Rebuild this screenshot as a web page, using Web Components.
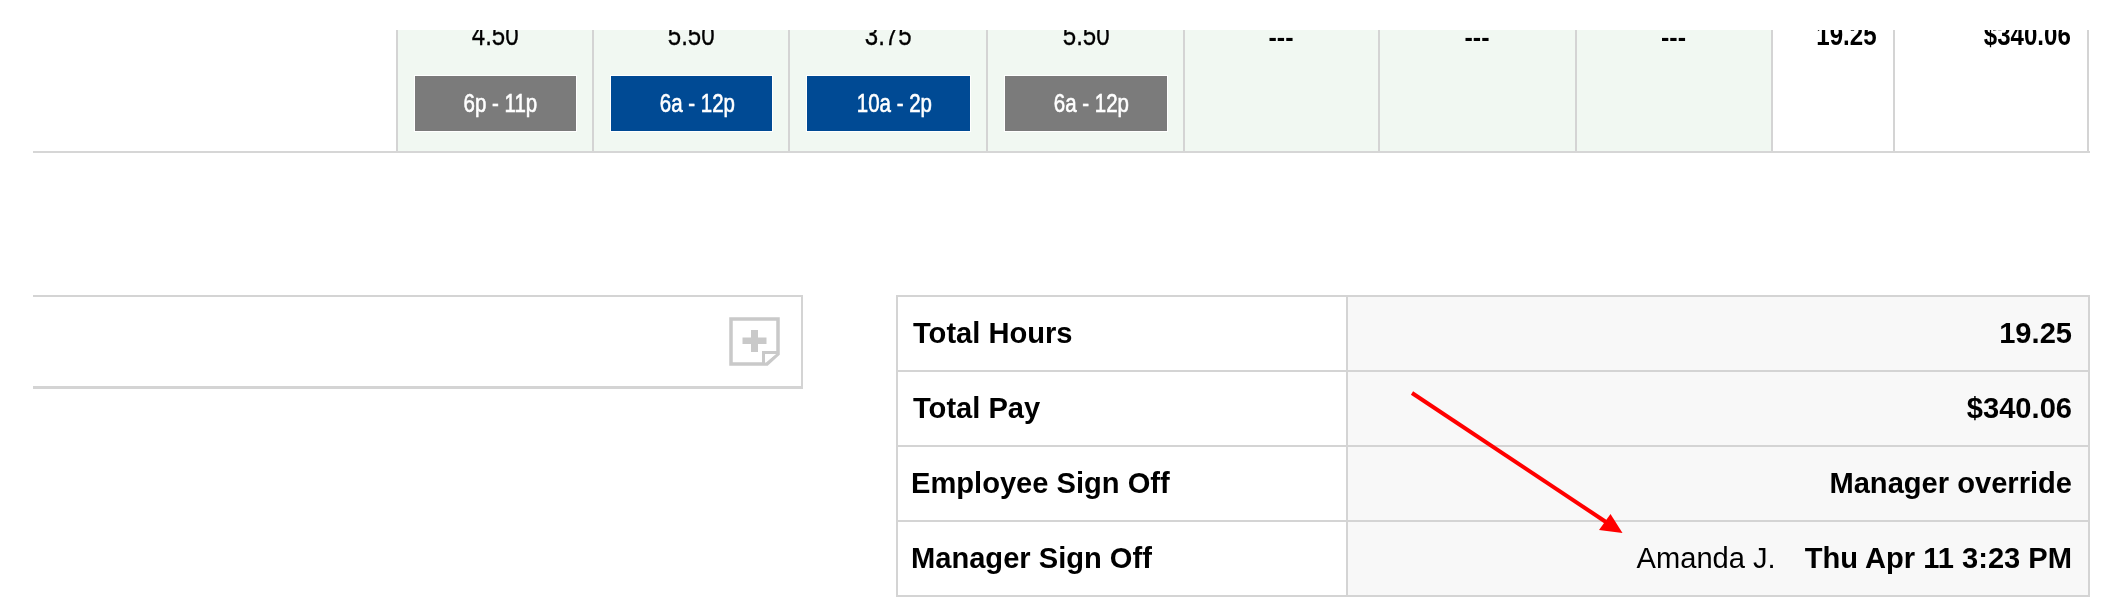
<!DOCTYPE html>
<html>
<head>
<meta charset="utf-8">
<title>Timesheet</title>
<style>
  html, body { margin: 0; background: #fff; }
  body { font-family: "Liberation Sans", Arial, sans-serif; color: #000; width: 2108px; height: 614px; overflow: hidden; position: relative; filter: blur(.45px); }
  .lower { display: flex; justify-content: space-between; align-items: flex-start; margin: 142px 18px 0 33px; }
</style>
</head>
<body>
<week-row>
  <day-cell hours="4.50" shift="6p - 11p" tone="grey"></day-cell>
  <day-cell hours="5.50" shift="6a - 12p" tone="blue"></day-cell>
  <day-cell hours="3.75" shift="10a - 2p" tone="blue"></day-cell>
  <day-cell hours="5.50" shift="6a - 12p" tone="grey"></day-cell>
  <day-cell hours="---" empty></day-cell>
  <day-cell hours="---" empty></day-cell>
  <day-cell hours="---" empty></day-cell>
  <total-cell>19.25</total-cell>
  <total-cell>$340.06</total-cell>
</week-row>
<div class="lower">
  <note-box></note-box>
  <summary-table>
    <summary-row label="Total Hours" style="--label-inset:15px"><b>19.25</b></summary-row>
    <summary-row label="Total Pay" style="--label-inset:15px"><b>$340.06</b></summary-row>
    <summary-row label="Employee Sign Off"><b>Manager override</b></summary-row>
    <summary-row label="Manager Sign Off"><span style="margin-right:29px">Amanda J.</span><b>Thu Apr 11 3:23 PM</b></summary-row>
  </summary-table>
</div>
<red-arrow></red-arrow>

<script>
  class WeekRow extends HTMLElement {
    connectedCallback() {
      if (this.shadowRoot) return;
      this.attachShadow({mode: 'open'});
      this.shadowRoot.innerHTML = `
        <style>
          :host {
            display: grid;
            grid-template-columns: 363px 196px 196px 198px 197px 195px 197px 196px 122px 196px;
            height: 121px;
            margin: 30px 18px 0 33px;
            border-bottom: 2px solid #d6d6d6;
            overflow: hidden;
          }
        </style>
        <div></div>
        <slot></slot>
      `;
    }
  }

  class DayCell extends HTMLElement {
    connectedCallback() {
      if (this.shadowRoot) return;
      this.attachShadow({mode: 'open'});
      const empty = this.hasAttribute('empty');
      const tone = this.getAttribute('tone') === 'blue' ? 'blue' : 'grey';
      this.shadowRoot.innerHTML = `
        <style>
          :host {
            display: flex;
            flex-direction: column;
            align-items: stretch;
            background: #f1f8f2;
            border-left: 2px solid #d4d4d4;
            text-align: center;
            padding: 0 16px 0 17px;
          }
          .hours { height: 46px; margin-top: -25px; line-height: 60px; flex: none; font-size: 29px; }
          .hours span { display: inline-block; transform: scaleX(.83); -webkit-text-stroke: .3px #000; }
          .dash { font-weight: bold; font-size: 25px; line-height: 46px; margin-top: -16px; height: 46px; text-indent: -2px; }
          .shift {
            margin-top: 25px;
            height: 55px;
            line-height: 55px;
            color: #fff;
            font-size: 25.6px;
            text-indent: 6px;
            box-shadow: 0 0 0 1px #fff;
          }
          .shift span { display: inline-block; transform: scaleX(.8); -webkit-text-stroke: .6px #fff; }
          .grey { background: #7b7b7b; }
          .blue { background: #004a94; }
        </style>
        ${empty
          ? `<div class="dash">${this.getAttribute('hours')}</div>`
          : `<div class="hours"><span>${this.getAttribute('hours')}</span></div>
             <div class="shift ${tone}"><span>${this.getAttribute('shift')}</span></div>`}
      `;
    }
  }

  class TotalCell extends HTMLElement {
    connectedCallback() {
      if (this.shadowRoot) return;
      this.attachShadow({mode: 'open'});
      this.shadowRoot.innerHTML = `
        <style>
          :host {
            display: block;
            border-left: 2px solid #d4d4d4;
            text-align: right;
            padding-right: 16px;
            font-weight: bold;
            font-size: 29px;
          }
          :host(:last-child) { border-right: 2px solid #d4d4d4; }
          div { height: 46px; margin-top: -25px; line-height: 60px; }
          span { display: inline-block; transform: scaleX(.83); transform-origin: right; }
        </style>
        <div><span><slot></slot></span></div>
      `;
    }
  }

  class NoteBox extends HTMLElement {
    connectedCallback() {
      if (this.shadowRoot) return;
      this.attachShadow({mode: 'open'});
      this.shadowRoot.innerHTML = `
        <style>
          :host {
            display: flex;
            justify-content: flex-end;
            align-items: flex-start;
            box-sizing: border-box;
            width: 770px;
            height: 94px;
            border: 2px solid #d4d4d4;
            border-left: 0;
            border-bottom-width: 3px;
            padding: 20px 21px 0 0;
          }
          svg { display: block; }
        </style>
        <svg width="51" height="49" viewBox="0 0 51 49">
          <path d="M2 2H49V37L38 47H2Z" fill="#fff" stroke="#c9c9c9" stroke-width="3.500"/>
          <path d="M34.500 47V35.500H49" fill="#fff" stroke="#c9c9c9" stroke-width="3"/>
          <path d="M22 13H29V20.500H37.500V27H29V35H22V27H13.500V20.500H22Z" fill="#c9c9c9"/>
        </svg>
      `;
    }
  }

  class SummaryTable extends HTMLElement {
    connectedCallback() {
      if (this.shadowRoot) return;
      this.attachShadow({mode: 'open'});
      this.shadowRoot.innerHTML = `
        <style>
          :host {
            display: block;
            box-sizing: border-box;
            width: 1194px;
            border: 2px solid #d4d4d4;
            border-bottom: 0;
          }
        </style>
        <slot></slot>
      `;
    }
  }

  class SummaryRow extends HTMLElement {
    connectedCallback() {
      if (this.shadowRoot) return;
      this.attachShadow({mode: 'open'});
      this.shadowRoot.innerHTML = `
        <style>
          :host {
            display: grid;
            grid-template-columns: 448px 1fr;
            height: 75px;
            box-sizing: border-box;
            border-bottom: 2px solid #d4d4d4;
            font-size: 29.1px;
            line-height: 73px;
          }
          .label { font-weight: bold; padding-left: var(--label-inset, 13px); white-space: nowrap; }
          .value { background: #f8f8f8; border-left: 2px solid #d4d4d4; text-align: right; padding-right: 16px; }
        </style>
        <div class="label">${this.getAttribute('label')}</div>
        <div class="value"><slot></slot></div>
      `;
    }
  }

  class RedArrow extends HTMLElement {
    connectedCallback() {
      if (this.shadowRoot) return;
      this.attachShadow({mode: 'open'});
      this.shadowRoot.innerHTML = `
        <style>
          :host { position: absolute; left: 0; top: 0; pointer-events: none; }
          svg { display: block; }
        </style>
        <svg width="2108" height="614" viewBox="0 0 2108 614">
          <line x1="1412" y1="393" x2="1606" y2="522" stroke="#ff0000" stroke-width="4"/>
          <path d="M1622.500 533L1610.500 514L1599 530Z" fill="#ff0000"/>
        </svg>
      `;
    }
  }

  customElements.define('week-row', WeekRow);
  customElements.define('day-cell', DayCell);
  customElements.define('total-cell', TotalCell);
  customElements.define('note-box', NoteBox);
  customElements.define('summary-table', SummaryTable);
  customElements.define('summary-row', SummaryRow);
  customElements.define('red-arrow', RedArrow);
</script>
</body>
</html>
